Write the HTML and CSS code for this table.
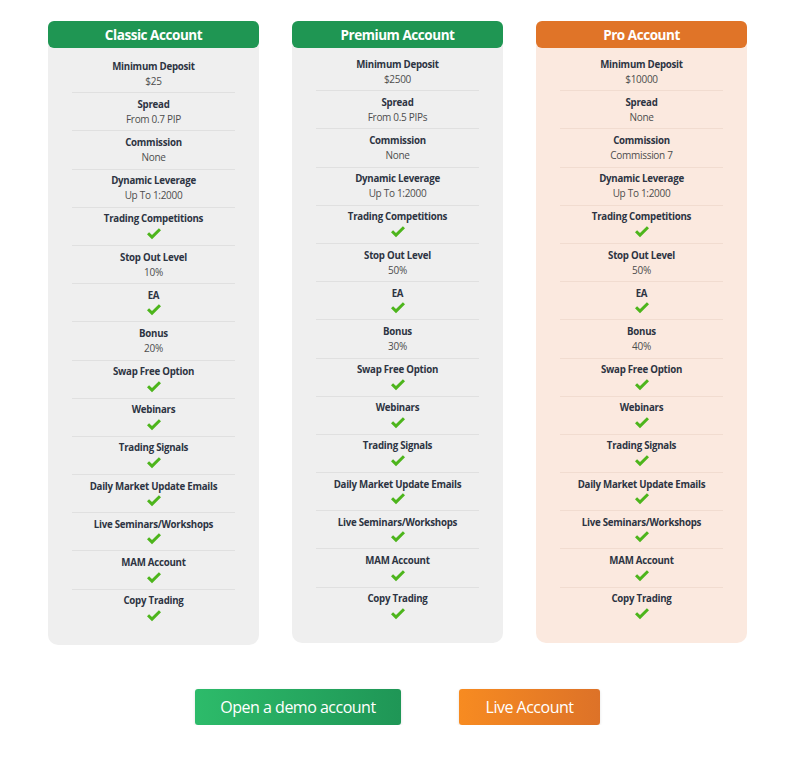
FILE: index.html
```html
<!DOCTYPE html>
<html lang="en">
<head>
<meta charset="utf-8">
<title>Account Types</title>
<link rel="stylesheet" href="styles.css">
</head>
<body>
<div class="page">
  <div class="cards">
    <div class="card card-classic">
      <div class="card-head">Classic Account</div>
      <div class="card-body">
        <div class="row"><div class="label">Minimum Deposit</div><div class="value">$25</div></div>
        <div class="row"><div class="label">Spread</div><div class="value">From 0.7 PIP</div></div>
        <div class="row"><div class="label">Commission</div><div class="value">None</div></div>
        <div class="row"><div class="label">Dynamic Leverage</div><div class="value">Up To 1:2000</div></div>
        <div class="row"><div class="label">Trading Competitions</div><div class="value"><svg class="check" viewBox="0 0 14 12"><polygon points="0,6.2 2.1,4.2 5,7.1 11.9,0.2 14,2.3 5,11.3"/></svg></div></div>
        <div class="row"><div class="label">Stop Out Level</div><div class="value">10%</div></div>
        <div class="row"><div class="label">EA</div><div class="value"><svg class="check" viewBox="0 0 14 12"><polygon points="0,6.2 2.1,4.2 5,7.1 11.9,0.2 14,2.3 5,11.3"/></svg></div></div>
        <div class="row"><div class="label">Bonus</div><div class="value">20%</div></div>
        <div class="row"><div class="label">Swap Free Option</div><div class="value"><svg class="check" viewBox="0 0 14 12"><polygon points="0,6.2 2.1,4.2 5,7.1 11.9,0.2 14,2.3 5,11.3"/></svg></div></div>
        <div class="row"><div class="label">Webinars</div><div class="value"><svg class="check" viewBox="0 0 14 12"><polygon points="0,6.2 2.1,4.2 5,7.1 11.9,0.2 14,2.3 5,11.3"/></svg></div></div>
        <div class="row"><div class="label">Trading Signals</div><div class="value"><svg class="check" viewBox="0 0 14 12"><polygon points="0,6.2 2.1,4.2 5,7.1 11.9,0.2 14,2.3 5,11.3"/></svg></div></div>
        <div class="row"><div class="label">Daily Market Update Emails</div><div class="value"><svg class="check" viewBox="0 0 14 12"><polygon points="0,6.2 2.1,4.2 5,7.1 11.9,0.2 14,2.3 5,11.3"/></svg></div></div>
        <div class="row"><div class="label">Live Seminars/Workshops</div><div class="value"><svg class="check" viewBox="0 0 14 12"><polygon points="0,6.2 2.1,4.2 5,7.1 11.9,0.2 14,2.3 5,11.3"/></svg></div></div>
        <div class="row"><div class="label">MAM Account</div><div class="value"><svg class="check" viewBox="0 0 14 12"><polygon points="0,6.2 2.1,4.2 5,7.1 11.9,0.2 14,2.3 5,11.3"/></svg></div></div>
        <div class="row"><div class="label">Copy Trading</div><div class="value"><svg class="check" viewBox="0 0 14 12"><polygon points="0,6.2 2.1,4.2 5,7.1 11.9,0.2 14,2.3 5,11.3"/></svg></div></div>
      </div>
    </div>

    <div class="card card-premium">
      <div class="card-head">Premium Account</div>
      <div class="card-body">
        <div class="row"><div class="label">Minimum Deposit</div><div class="value">$2500</div></div>
        <div class="row"><div class="label">Spread</div><div class="value">From 0.5 PIPs</div></div>
        <div class="row"><div class="label">Commission</div><div class="value">None</div></div>
        <div class="row"><div class="label">Dynamic Leverage</div><div class="value">Up To 1:2000</div></div>
        <div class="row"><div class="label">Trading Competitions</div><div class="value"><svg class="check" viewBox="0 0 14 12"><polygon points="0,6.2 2.1,4.2 5,7.1 11.9,0.2 14,2.3 5,11.3"/></svg></div></div>
        <div class="row"><div class="label">Stop Out Level</div><div class="value">50%</div></div>
        <div class="row"><div class="label">EA</div><div class="value"><svg class="check" viewBox="0 0 14 12"><polygon points="0,6.2 2.1,4.2 5,7.1 11.9,0.2 14,2.3 5,11.3"/></svg></div></div>
        <div class="row"><div class="label">Bonus</div><div class="value">30%</div></div>
        <div class="row"><div class="label">Swap Free Option</div><div class="value"><svg class="check" viewBox="0 0 14 12"><polygon points="0,6.2 2.1,4.2 5,7.1 11.9,0.2 14,2.3 5,11.3"/></svg></div></div>
        <div class="row"><div class="label">Webinars</div><div class="value"><svg class="check" viewBox="0 0 14 12"><polygon points="0,6.2 2.1,4.2 5,7.1 11.9,0.2 14,2.3 5,11.3"/></svg></div></div>
        <div class="row"><div class="label">Trading Signals</div><div class="value"><svg class="check" viewBox="0 0 14 12"><polygon points="0,6.2 2.1,4.2 5,7.1 11.9,0.2 14,2.3 5,11.3"/></svg></div></div>
        <div class="row"><div class="label">Daily Market Update Emails</div><div class="value"><svg class="check" viewBox="0 0 14 12"><polygon points="0,6.2 2.1,4.2 5,7.1 11.9,0.2 14,2.3 5,11.3"/></svg></div></div>
        <div class="row"><div class="label">Live Seminars/Workshops</div><div class="value"><svg class="check" viewBox="0 0 14 12"><polygon points="0,6.2 2.1,4.2 5,7.1 11.9,0.2 14,2.3 5,11.3"/></svg></div></div>
        <div class="row"><div class="label">MAM Account</div><div class="value"><svg class="check" viewBox="0 0 14 12"><polygon points="0,6.2 2.1,4.2 5,7.1 11.9,0.2 14,2.3 5,11.3"/></svg></div></div>
        <div class="row"><div class="label">Copy Trading</div><div class="value"><svg class="check" viewBox="0 0 14 12"><polygon points="0,6.2 2.1,4.2 5,7.1 11.9,0.2 14,2.3 5,11.3"/></svg></div></div>
      </div>
    </div>

    <div class="card card-pro">
      <div class="card-head">Pro Account</div>
      <div class="card-body">
        <div class="row"><div class="label">Minimum Deposit</div><div class="value">$10000</div></div>
        <div class="row"><div class="label">Spread</div><div class="value">None</div></div>
        <div class="row"><div class="label">Commission</div><div class="value">Commission 7</div></div>
        <div class="row"><div class="label">Dynamic Leverage</div><div class="value">Up To 1:2000</div></div>
        <div class="row"><div class="label">Trading Competitions</div><div class="value"><svg class="check" viewBox="0 0 14 12"><polygon points="0,6.2 2.1,4.2 5,7.1 11.9,0.2 14,2.3 5,11.3"/></svg></div></div>
        <div class="row"><div class="label">Stop Out Level</div><div class="value">50%</div></div>
        <div class="row"><div class="label">EA</div><div class="value"><svg class="check" viewBox="0 0 14 12"><polygon points="0,6.2 2.1,4.2 5,7.1 11.9,0.2 14,2.3 5,11.3"/></svg></div></div>
        <div class="row"><div class="label">Bonus</div><div class="value">40%</div></div>
        <div class="row"><div class="label">Swap Free Option</div><div class="value"><svg class="check" viewBox="0 0 14 12"><polygon points="0,6.2 2.1,4.2 5,7.1 11.9,0.2 14,2.3 5,11.3"/></svg></div></div>
        <div class="row"><div class="label">Webinars</div><div class="value"><svg class="check" viewBox="0 0 14 12"><polygon points="0,6.2 2.1,4.2 5,7.1 11.9,0.2 14,2.3 5,11.3"/></svg></div></div>
        <div class="row"><div class="label">Trading Signals</div><div class="value"><svg class="check" viewBox="0 0 14 12"><polygon points="0,6.2 2.1,4.2 5,7.1 11.9,0.2 14,2.3 5,11.3"/></svg></div></div>
        <div class="row"><div class="label">Daily Market Update Emails</div><div class="value"><svg class="check" viewBox="0 0 14 12"><polygon points="0,6.2 2.1,4.2 5,7.1 11.9,0.2 14,2.3 5,11.3"/></svg></div></div>
        <div class="row"><div class="label">Live Seminars/Workshops</div><div class="value"><svg class="check" viewBox="0 0 14 12"><polygon points="0,6.2 2.1,4.2 5,7.1 11.9,0.2 14,2.3 5,11.3"/></svg></div></div>
        <div class="row"><div class="label">MAM Account</div><div class="value"><svg class="check" viewBox="0 0 14 12"><polygon points="0,6.2 2.1,4.2 5,7.1 11.9,0.2 14,2.3 5,11.3"/></svg></div></div>
        <div class="row"><div class="label">Copy Trading</div><div class="value"><svg class="check" viewBox="0 0 14 12"><polygon points="0,6.2 2.1,4.2 5,7.1 11.9,0.2 14,2.3 5,11.3"/></svg></div></div>
      </div>
    </div>
  </div>

  <div class="actions">
    <a class="btn btn-demo" href="#">Open a demo account</a>
    <a class="btn btn-live" href="#">Live Account</a>
  </div>
</div>
</body>
</html>
```

FILE: styles.css
```css
* { box-sizing: border-box; }

html, body {
  margin: 0;
  padding: 0;
  background: #ffffff;
  font-family: "Open Sans", "Noto Sans", Arial, sans-serif;
  color: #2f3542;
}

.page {
  padding-top: 21px;
}

.cards {
  display: flex;
  align-items: flex-start;
  gap: 33px;
  padding-left: 48px;
}

.card {
  width: 211px;
  border-radius: 10px;
  background: #efefef;
}

.card-pro {
  background: #fbe9df;
}

.card-head {
  height: 27px;
  padding-top: 1px;
  border-radius: 6px;
  background: #1f9653;
  color: #ffffff;
  font-size: 13.5px;
  font-weight: 700;
  letter-spacing: -0.45px;
  line-height: 27px;
  text-align: center;
}

.card-pro .card-head {
  background: #e07428;
}

.card-body {
  padding: 5px 24px 18px;
}

.card-classic .card-body {
  padding-top: 7px;
}

.row {
  padding: 3.6px 0;
  border-bottom: 1px solid #e0e0e0;
  text-align: center;
}

.card-pro .row {
  border-bottom-color: #f1dcd0;
}

.row:last-child {
  border-bottom: 0;
}

.label {
  font-size: 9.7px;
  font-weight: 700;
  letter-spacing: -0.25px;
  line-height: 15px;
  color: #2d3442;
}

.value {
  font-size: 10px;
  letter-spacing: -0.3px;
  line-height: 15px;
  color: #4d4d4d;
  height: 15px;
  display: flex;
  justify-content: center;
  align-items: center;
}

.check {
  width: 14px;
  height: 12px;
  fill: #4db51c;
}

.actions {
  display: flex;
  gap: 58px;
  padding-left: 195px;
  margin-top: 44px;
}

.btn {
  display: block;
  height: 36px;
  line-height: 36px;
  border-radius: 3px;
  color: #ffffff;
  font-size: 16px;
  letter-spacing: -0.5px;
  text-decoration: none;
  text-align: center;
  box-shadow: 0 1px 3px rgba(0, 0, 0, 0.12);
}

.btn-demo {
  width: 206px;
  background: linear-gradient(90deg, #2dbb6a 0%, #1f9656 100%);
}

.btn-live {
  width: 141px;
  background: linear-gradient(90deg, #f78b21 0%, #dd7228 100%);
}
```
